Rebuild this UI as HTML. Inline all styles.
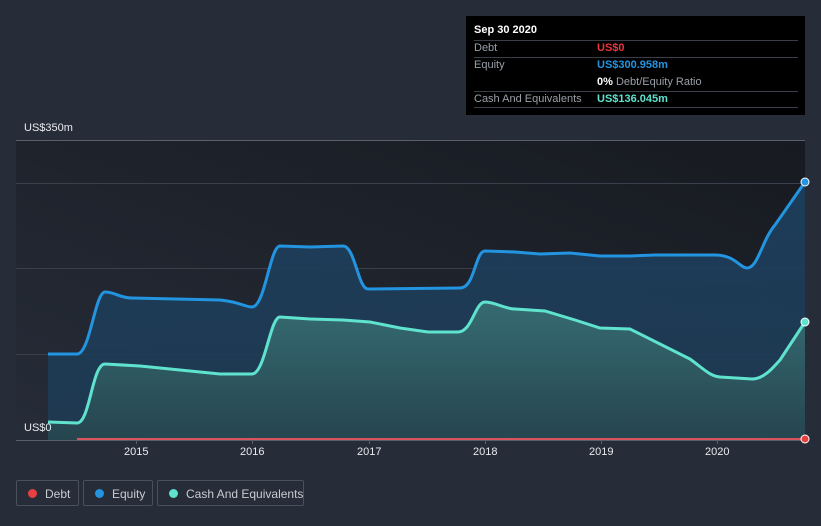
<!DOCTYPE html><html><head><style>
body{margin:0;width:821px;height:526px;background:#262c38;font-family:"Liberation Sans",sans-serif;overflow:hidden;position:relative}
.tt{position:absolute;left:466px;top:16px;width:339px;height:99px;background:#000}
.tt div{position:absolute;font-size:11px;color:#9aa0a8;white-space:nowrap}
.ln{position:absolute;left:8px;width:324px;height:1px;background:#3a3f47}
.leg{position:absolute;top:480px;height:26px;border:1px solid #4a505c;border-radius:2px;color:#c8ccd2;font-size:12px;line-height:26px;box-sizing:border-box;white-space:nowrap}
.leg i{position:absolute;left:11px;top:8px;width:9px;height:9px;border-radius:50%}
.ax{position:absolute;color:#e8eaee;font-size:11px}
</style></head><body>
<svg width="821" height="526" style="position:absolute;left:0;top:0">
<defs>
<linearGradient id="bg" x1="0" y1="1" x2="1" y2="0"><stop offset="0" stop-color="#262c38"/><stop offset="1" stop-color="#171a20"/></linearGradient>
<linearGradient id="eq" x1="0" y1="0" x2="0" y2="1"><stop offset="0" stop-color="#1d4060" stop-opacity=".9"/><stop offset="1" stop-color="#1e3a52" stop-opacity=".9"/></linearGradient>
<linearGradient id="ca" x1="0" y1="0" x2="0" y2="1"><stop offset="0" stop-color="#3a7478" stop-opacity=".85"/><stop offset="1" stop-color="#27474f" stop-opacity=".85"/></linearGradient>
</defs>
<rect x="16" y="140" width="789" height="300" fill="url(#bg)"/>
<g stroke="#3a404b" stroke-width="1"><line x1="16" y1="183.5" x2="805" y2="183.5"/><line x1="16" y1="268.5" x2="805" y2="268.5"/><line x1="16" y1="354.5" x2="805" y2="354.5"/></g>
<line x1="16" y1="140.5" x2="805" y2="140.5" stroke="#5a606b"/>
<line x1="16" y1="440.5" x2="805" y2="440.5" stroke="#5a606b"/>
<path d="M48,354 L77,354 C90,354 95,292 105,292 C115,292 120,298 132,298 L220,300 C240,302 245,307 252,307 C265,307 270,246 280,246 L310,247 L343,246 C355,246 358,289 368,289 L460,288 C475,288 475,251 485,251 L515,252 L540,254 L570,253 L600,256 L630,256 L655,255 L715,255 C735,255 740,268 747,268 C758,268 762,240 775,225 L805,182 L805,440 L48,440Z" fill="url(#eq)"/>
<path d="M48,422 L77,423 C90,423 92,364 105,364 L140,366 L180,370 L220,374 L252,374 C265,374 270,317 280,317 L310,319 L343,320 L370,322 L400,328 L428,332 L458,332 C472,332 475,302 485,302 C495,302 505,309 515,309 L545,311 L575,320 L600,328 L630,329 L660,344 L690,359 C705,370 710,376 720,377 L752,379 C765,379 775,365 780,360 L805,322 L805,440 L48,440Z" fill="url(#ca)"/>
<path d="M48,354 L77,354 C90,354 95,292 105,292 C115,292 120,298 132,298 L220,300 C240,302 245,307 252,307 C265,307 270,246 280,246 L310,247 L343,246 C355,246 358,289 368,289 L460,288 C475,288 475,251 485,251 L515,252 L540,254 L570,253 L600,256 L630,256 L655,255 L715,255 C735,255 740,268 747,268 C758,268 762,240 775,225 L805,182" fill="none" stroke="#2394e0" stroke-width="3"/>
<path d="M48,422 L77,423 C90,423 92,364 105,364 L140,366 L180,370 L220,374 L252,374 C265,374 270,317 280,317 L310,319 L343,320 L370,322 L400,328 L428,332 L458,332 C472,332 475,302 485,302 C495,302 505,309 515,309 L545,311 L575,320 L600,328 L630,329 L660,344 L690,359 C705,370 710,376 720,377 L752,379 C765,379 775,365 780,360 L805,322" fill="none" stroke="#5fe3cf" stroke-width="3"/>
<line x1="77" y1="439" x2="805" y2="439" stroke="#d9545c" stroke-width="2"/>
<circle cx="805" cy="182" r="4" fill="#2394e0" stroke="#fff" stroke-width="1"/>
<circle cx="805" cy="322" r="4" fill="#5fe3cf" stroke="#fff" stroke-width="1"/>
<circle cx="805" cy="439" r="4" fill="#e84040" stroke="#fff" stroke-width="1"/>
<g stroke="#5a606b"><line x1="136.5" y1="440" x2="136.5" y2="444"/><line x1="252.5" y1="440" x2="252.5" y2="444"/><line x1="369.5" y1="440" x2="369.5" y2="444"/><line x1="485.5" y1="440" x2="485.5" y2="444"/><line x1="601.5" y1="440" x2="601.5" y2="444"/><line x1="717.5" y1="440" x2="717.5" y2="444"/></g>
</svg>
<div class="ax" style="left:24px;top:122px">US$350m</div>
<div class="ax" style="left:24px;top:422px">US$0</div>
<div class="ax" style="left:124px;top:446px">2015</div>
<div class="ax" style="left:240px;top:446px">2016</div>
<div class="ax" style="left:357px;top:446px">2017</div>
<div class="ax" style="left:473px;top:446px">2018</div>
<div class="ax" style="left:589px;top:446px">2019</div>
<div class="ax" style="left:705px;top:446px">2020</div>
<div class="tt">
<div style="left:8px;top:8px;color:#fff;font-weight:bold">Sep 30 2020</div>
<div class="ln" style="top:24px"></div>
<div style="left:8px;top:26px">Debt</div><div style="left:131px;top:26px;color:#e8353c;font-weight:bold">US$0</div>
<div class="ln" style="top:41px"></div>
<div style="left:8px;top:43px">Equity</div><div style="left:131px;top:43px;color:#2394e0;font-weight:bold">US$300.958m</div>
<div style="left:131px;top:60px"><b style="color:#fff">0%</b> Debt/Equity Ratio</div>
<div class="ln" style="top:75px"></div>
<div style="left:8px;top:77px">Cash And Equivalents</div><div style="left:131px;top:77px;color:#5fe3cf;font-weight:bold">US$136.045m</div>
<div class="ln" style="top:91px"></div>
</div>
<div class="leg" style="left:16px;width:63px"><i style="background:#e84040"></i><span style="margin-left:28px">Debt</span></div>
<div class="leg" style="left:83px;width:70px"><i style="background:#2394e0"></i><span style="margin-left:28px">Equity</span></div>
<div class="leg" style="left:157px;width:147px"><i style="background:#5fe3cf"></i><span style="margin-left:28px">Cash And Equivalents</span></div>
</body></html>
